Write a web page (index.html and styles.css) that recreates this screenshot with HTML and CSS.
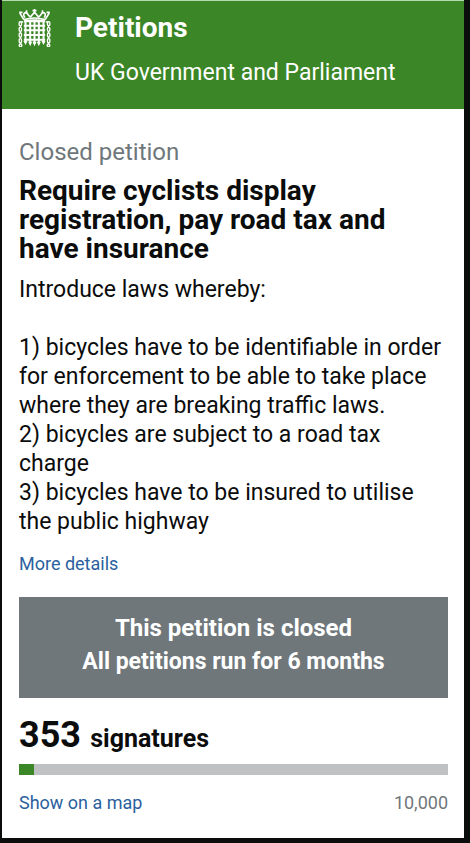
FILE: index.html
```html
<!DOCTYPE html>
<html lang="en">
    <head>
        <meta charset="utf-8">
        <meta name="viewport" content="width=device-width, initial-scale=1">
        <title>Petitions</title>

        <link rel="stylesheet" href="styles.css">
    </head>

    <body>
        <header class="header">
            <svg class="logo" viewBox="0 0 96 114" aria-hidden="true">
                <!-- crown -->
                <g fill="none" stroke="#fff" stroke-width="5">
                    <path d="M16 32 L4 12 M80 32 L92 12 M16 32 Q48 22 80 32"/>
                    <path d="M19 26 Q10 12 24 10 Q30 20 36 24 Q42 16 48 10 Q54 16 60 24 Q66 20 72 10 Q86 12 77 26"/>
                    <path d="M48 0 V14 M42 5 H54 M2 10 H12 M84 10 H94 M24 4 V14 M72 4 V14"/>
                </g>
                <!-- portcullis -->
                <path d="M16 34 Q48 27 80 34 V40 H16 Z" fill="#fff"/>
                <g fill="none" stroke="#fff" stroke-width="6">
                    <path d="M21 38 V100 M35 38 V104 M48 38 V104 M61 38 V104 M75 38 V100"/>
                    <path d="M16 50 H80 M16 64 H80 M16 78 H80 M16 92 H80"/>
                </g>
                <path d="M15 96 H27 L21 108 Z M29 98 H41 L35 112 Z M42 98 H54 L48 112 Z M55 98 H67 L61 112 Z M69 96 H81 L75 108 Z" fill="#fff"/>
                <!-- chains -->
                <g fill="none" stroke="#fff" stroke-width="4">
                    <path d="M14 39 H6 M82 39 H90"/>
                    <rect x="2" y="38" width="7" height="12" rx="3"/>
                    <rect x="2" y="55" width="7" height="12" rx="3"/>
                    <rect x="2" y="72" width="7" height="12" rx="3"/>
                    <rect x="2" y="89" width="7" height="12" rx="3"/>
                    <circle cx="6" cy="109" r="4"/>
                    <rect x="87" y="38" width="7" height="12" rx="3"/>
                    <rect x="87" y="55" width="7" height="12" rx="3"/>
                    <rect x="87" y="72" width="7" height="12" rx="3"/>
                    <rect x="87" y="89" width="7" height="12" rx="3"/>
                    <circle cx="90" cy="109" r="4"/>
                    <path d="M6 50 V55 M6 67 V72 M6 84 V89 M6 101 V105 M90 50 V55 M90 67 V72 M90 84 V89 M90 101 V105"/>
                </g>
            </svg>
            <div>
                <a class="site-name" href="#">Petitions</a>
                <p class="tagline">UK Government and Parliament</p>
            </div>
        </header>

        <main class="content">
            <p class="status">Closed petition</p>
            <h1 class="title">Require cyclists display registration, pay road tax and have insurance</h1>

            <p class="details">
                Introduce laws whereby:<br>
                <br>
                1) bicycles have to be identifiable in order for enforcement to be able to take place where they are breaking traffic laws.<br>
                2) bicycles are subject to a road tax charge<br>
                3) bicycles have to be insured to utilise the public highway
            </p>
            <a class="link" href="#">More details</a>

            <div class="closed-notice">
                <p class="closed-heading">This petition is closed</p>
                <p>All petitions run for 6 months</p>
            </div>

            <p class="signatures"><span class="count">353</span> signatures</p>
            <div class="bar">
                <div class="bar-done" style="width: 3.53%"></div>
            </div>
            <div class="bar-footer">
                <a class="link" href="#">Show on a map</a>
                <span class="goal">10,000</span>
            </div>
        </main>
    </body>
</html>
```

FILE: styles.css
```css
html {
    background-color: #0b0c0c;
}

body {
    margin: 0px 6px 5px 2px;
    background-color: #fff;
    color: #0b0c0c;
    font-family: Roboto, "Liberation Sans", sans-serif;
    font-size: 23px;
    line-height: 29px;
}

p, h1 {
    margin: 0px;
}

.header {
    display: flex;
    gap: 24px;
    padding: 8px 16px 22px 16px;
    background-color: #3b8626;
    border-top: 1px solid #b5d8ac;
    color: #fff;
}

.logo {
    width: 33px;
    height: 38px;
}

.site-name {
    display: block;
    padding-top: 4px;
    color: #fff;
    font-size: 28px;
    font-weight: bold;
    text-decoration: none;
}

.tagline {
    padding-top: 16px;
}

.content {
    padding: 29px 16px 24px 17px;
}

.status {
    color: #6f777b;
    font-size: 24px;
}

.title {
    margin: 9px 0px 12px 0px;
    font-size: 28px;
    line-height: 29px;
}

.link {
    display: inline-block;
    color: #2b5f9e;
    font-size: 18px;
    line-height: 22px;
    text-decoration: none;
}

.link:hover {
    text-decoration: underline;
}

.details {
    margin-bottom: 12px;
}

.closed-notice {
    margin: 20px 0px 17px 0px;
    padding: 14px 16px 19px 16px;
    background-color: #6f777b;
    color: #fff;
    font-weight: bold;
    line-height: 34px;
    text-align: center;
}

.closed-heading {
    font-size: 24px;
}

.signatures {
    font-size: 25px;
    font-weight: bold;
    line-height: 40px;
}

.count {
    margin-right: 3px;
    font-size: 36px;
}

.bar {
    height: 11px;
    margin: 5px 0px 17px 0px;
    background-color: #bfc1c3;
}

.bar-done {
    height: 11px;
    background-color: #3b8626;
}

.bar-footer {
    display: flex;
    justify-content: space-between;
}

.goal {
    color: #6f777b;
    font-size: 18px;
    line-height: 22px;
}
```
